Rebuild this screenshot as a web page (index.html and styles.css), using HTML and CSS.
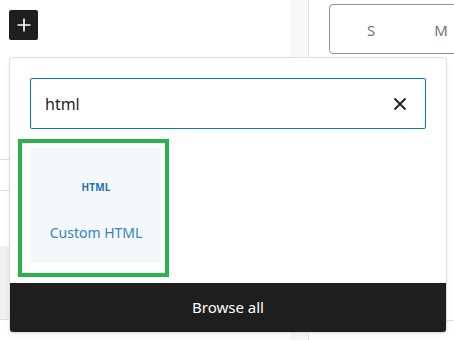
FILE: index.html
```html
<!DOCTYPE html>
<html>
	<head>
		<title>Block inserter</title>
		<link rel="stylesheet" href="styles.css">
	</head>
	<body>
		<div class="page">
			<div class="editor">
				<div class="toolbar">
					<button class="addButton" aria-label="Add block">
						<svg width="16" height="16" viewBox="0 0 16 16"><path d="M8 1.5v13M1.5 8h13" stroke="#fff" stroke-width="1.6"/></svg>
					</button>
				</div>
				<div class="rowLine first"></div>
				<div class="rowLine second"></div>
				<div class="grayBlock"></div>
			</div>
			<div class="strip"></div>
			<div class="sidebar">
				<div class="calendar">
					<span>S</span>
					<span>M</span>
				</div>
			</div>
		</div>

		<div class="popover">
			<div class="popoverBody">
				<div class="search">
					<input type="text" value="html" autocomplete="off">
					<svg class="clearIcon" width="14" height="14" viewBox="0 0 14 14"><path d="M1.5 1.5l11 11M12.5 1.5l-11 11" stroke="#1e1e1e" stroke-width="1.8"/></svg>
				</div>
				<div class="results">
					<div class="highlight">
						<div class="blockItem">
							<span class="blockIcon">HTML</span>
							<span class="blockTitle">Custom HTML</span>
						</div>
					</div>
				</div>
			</div>
			<button class="browseAll">Browse all</button>
		</div>
	</body>
</html>
```
FILE: styles.css
```css
*
	{
		box-sizing: border-box;
	}
body
	{
		margin: 0;
		width: 454px;
		height: 340px;
		overflow: hidden;
		background-color: #fff;
		font-family: "Noto Sans", "Open Sans", sans-serif;
		position: relative;
	}
.page
	{
		display: flex;
		height: 340px;
	}
.editor
	{
		width: 290px;
		flex-shrink: 0;
		display: flex;
		flex-direction: column;
	}
.toolbar
	{
		height: 50px;
		padding: 10px 0 0 9px;
	}
.addButton
	{
		width: 29px;
		height: 30px;
		border: none;
		border-radius: 2px;
		background-color: #1e1e1e;
		padding: 0;
		display: flex;
		align-items: center;
		justify-content: center;
	}
.rowLine
	{
		height: 1px;
		width: 20px;
		background-color: #dcdcde;
	}
.first
	{
		margin-top: 109px;
	}
.second
	{
		margin-top: 30px;
	}
.grayBlock
	{
		margin-top: 55px;
		height: 74px;
		width: 20px;
		background-color: #f0f0f1;
		border-bottom: 1px solid #dcdcde;
	}
.strip
	{
		width: 19px;
		flex-shrink: 0;
		background-color: #f8f8f8;
		border-right: 1px solid #dde3ea;
	}
.sidebar
	{
		flex: 1;
		min-width: 0;
		overflow: hidden;
		padding: 4px 0 0 20px;
		position: relative;
	}
.sidebar::after
	{
		content: "";
		position: absolute;
		left: 0;
		right: 0;
		top: 320px;
		height: 1px;
		background-color: #dcdcde;
	}
.calendar
	{
		width: 160px;
		height: 50px;
		border: 1px solid #8c8f94;
		border-radius: 4px;
		display: flex;
		align-items: center;
		gap: 59px;
		padding-left: 37px;
		padding-top: 2px;
		color: #757575;
		font-size: 15px;
	}
.popover
	{
		position: absolute;
		left: 9px;
		top: 57px;
		width: 438px;
		height: 276px;
		background-color: #fff;
		border: 1px solid #dcdcde;
		border-radius: 4px;
		box-shadow: 0 2px 6px rgba(0, 0, 0, 0.05);
		display: flex;
		flex-direction: column;
		overflow: hidden;
	}
.popoverBody
	{
		flex: 1;
		padding: 20px 20px 0 8px;
	}
.search
	{
		position: relative;
		margin-left: 12px;
		height: 51px;
	}
.search input
	{
		width: 100%;
		height: 51px;
		border: 1.5px solid #007cba;
		border-radius: 2px;
		padding: 0 40px 0 14px;
		font-family: inherit;
		font-size: 16px;
		color: #1e1e1e;
		outline: none;
	}
.clearIcon
	{
		position: absolute;
		right: 19px;
		top: 19px;
	}
.results
	{
		padding-top: 10px;
	}
.highlight
	{
		width: 151px;
		height: 138px;
		border: 4px solid #2bb24c;
		padding: 5px 3px 10px 8px;
	}
.blockItem
	{
		height: 100%;
		background-color: #f4f8fb;
		border-radius: 2px;
		display: flex;
		flex-direction: column;
		align-items: center;
		padding-top: 32px;
		color: #2271b1;
	}
.blockIcon
	{
		font-size: 10px;
		font-weight: 700;
		letter-spacing: 0.2px;
		color: #2271b1;
	}
.blockTitle
	{
		margin-top: 29px;
		font-size: 14px;
		color: #3582c4;
	}
.browseAll
	{
		height: 49px;
		border: none;
		background-color: #1e1e1e;
		color: #fff;
		font-family: inherit;
		font-size: 15px;
		font-weight: 400;
		padding: 0 0 2px;
	}
```
